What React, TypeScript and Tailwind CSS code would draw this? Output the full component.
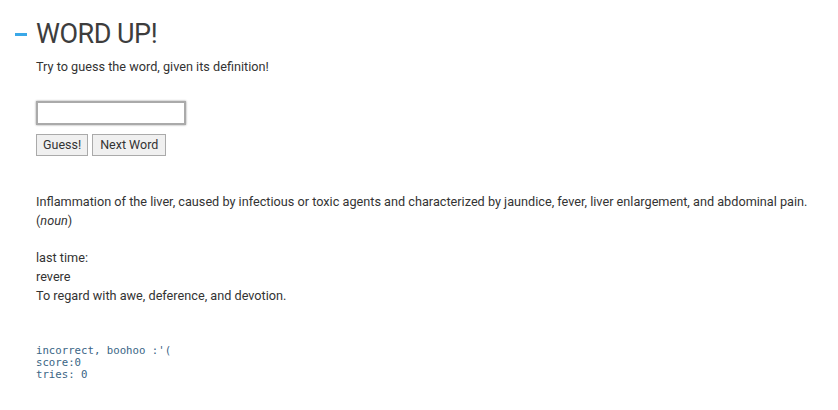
export default function App() {
  return (
    <div className="min-h-[410px] bg-white text-[#333] font-['Roboto',sans-serif]">
      <div className="pt-[14px] pl-[15px]">
        <h1 className="flex items-center text-[27px] leading-[40px] font-normal tracking-[-0.5px] text-[#3d3d3d]">
          <span className="mr-[9px] h-[3px] w-[12px] bg-[#3aa8e8]" />
          WORD UP!
        </h1>
      </div>
      <div className="pl-[36px] text-[12.7px] leading-[19px]">
        <p className="mt-[3px]">Try to guess the word, given its definition!</p>

        <div className="mt-[25px]">
          <input
            type="text"
            className="block h-[24px] w-[150px] border-2 border-[#aaa] bg-white shadow-[0_0_2px_#999] outline-none"
          />
          <div className="mt-[9px] flex gap-[4px]">
            <button className="h-[22px] border border-[#aaa] bg-[#f0f0f0] px-[6px] text-[12.5px] leading-[20px] text-[#333]">
              Guess!
            </button>
            <button className="h-[22px] border border-[#aaa] bg-[#f0f0f0] px-[7px] text-[12.5px] leading-[20px] text-[#333]">
              Next Word
            </button>
          </div>
        </div>

        <div className="mt-[36px]">
          <p>
            Inflammation of the liver, caused by infectious or toxic agents and characterized by jaundice, fever, liver
            enlargement, and abdominal pain.
          </p>
          <p>
            (<em>noun</em>)
          </p>
        </div>

        <div className="mt-[18px]">
          <p>last time:</p>
          <p>revere</p>
          <p>To regard with awe, deference, and devotion.</p>
        </div>

        <pre className="mt-[40px] font-['DejaVu_Sans_Mono',monospace] text-[10.7px] leading-[12px] text-[#3a6585]">
{`incorrect, boohoo :'(
score:0
tries: 0`}
        </pre>
      </div>
    </div>
  );
}
